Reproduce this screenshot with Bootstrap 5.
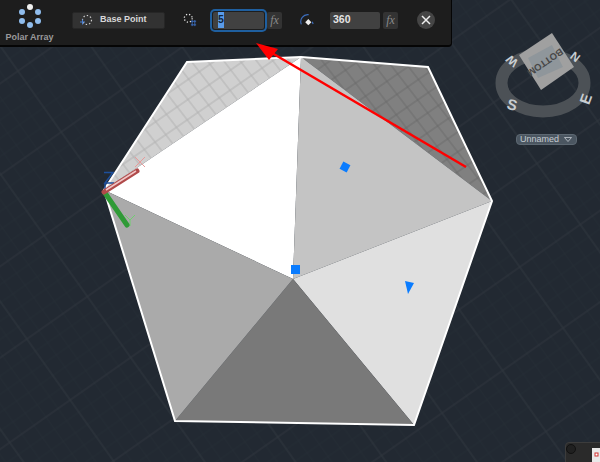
<!DOCTYPE html>
<html lang="en">
<head>
    <meta charset="UTF-8">
    <meta name="viewport" content="width=device-width, initial-scale=1.0">
    <title>Polar Array</title>
    <link href="https://cdn.jsdelivr.net/npm/bootstrap@5.3.0/dist/css/bootstrap.min.css" rel="stylesheet">
    <style>
        body {
            background: #222932;
            font-family: "Liberation Sans", Arial, sans-serif;
            overflow: hidden;
        }
        .stage {
            width: 600px;
            height: 462px;
            overflow: hidden;
        }
        .scene {
            position: absolute;
            left: 0;
            top: 0;
        }
        .ribbon {
            position: relative;
            width: 452px;
            height: 47px;
            background: #1d1d1d;
            border-right: 1px solid #050505;
            border-bottom: 2px solid #050505;
            border-bottom-right-radius: 4px;
            padding-left: 5px;
            padding-bottom: 5px;
            color: #d6d6d6;
        }
        .ribbon-title {
            width: 49px;
            padding-top: 5px;
            font-size: 9px;
            font-weight: 700;
            color: #9a9a9a;
            line-height: 10px;
        }
        .base-btn {
            width: 93px;
            height: 17px;
            margin-left: 18px;
            padding: 0;
            background: #323232;
            border: 1px solid #262626;
            border-radius: 2px;
            font-size: 9px;
            font-weight: 700;
            color: #d8d8d8;
        }
        .base-btn svg {
            margin-left: 7px;
        }
        .base-btn span {
            margin-left: 6px;
        }
        .count-icon {
            margin-left: 18px;
        }
        .val-box {
            height: 17px;
            background: #414141;
            border-radius: 2px;
            font-size: 10.5px;
            font-weight: 700;
            color: #e4e4e4;
            padding-left: 3px;
        }
        .val-count {
            width: 51px;
            margin-left: 16px;
            padding-left: 5px;
            box-shadow: 0 0 0 1px #1d1d1d, 0 0 0 3px #1f5f9f;
        }
        .val-count span {
            background: #5a9be8;
            color: #12263c;
        }
        .val-angle {
            width: 50px;
            margin-left: 16px;
        }
        .fx-box {
            width: 15px;
            height: 17px;
            margin-left: 3px;
            background: #333;
            border-radius: 2px;
            color: #8a8a8a;
            font-family: "Liberation Serif", serif;
            font-style: italic;
            font-size: 12px;
        }
        .angle-icon {
            margin-left: 18px;
        }
        .close-dot {
            width: 18px;
            height: 18px;
            margin-left: 19px;
            background: #454545;
        }
        .cube-pill {
            position: absolute;
            left: 516px;
            top: 134px;
            width: 61px;
            height: 11px;
            background: #4b5661;
            border: 1px solid #5d6872;
            border-radius: 4px;
            color: #c4cad0;
            font-size: 9px;
            line-height: 9px;
            padding-left: 3px;
        }
        .corner-panel {
            position: absolute;
            left: 565px;
            top: 442px;
            width: 40px;
            height: 25px;
            background: #2a2a2a;
            border: 1px solid #3c3c3c;
            border-radius: 4px;
        }
    </style>
</head>
<body>

<div class="stage position-relative">
    <!-- model space -->
    <svg class="scene" width="600" height="462" viewBox="0 0 600 462">
        <defs>
            <pattern id="floorGrid" patternUnits="userSpaceOnUse" width="10" height="10" patternTransform="matrix(6.05 -4.25 4.33 6.1 18 71)">
                <path d="M2 0V10M4 0V10M6 0V10M8 0V10M0 2H10M0 4H10M0 6H10M0 8H10" fill="none" stroke="#252c35" stroke-width=".1"/>
                <path d="M0 0H10M0 10H10M0 0V10M10 0V10" fill="none" stroke="#2f363e" stroke-width=".14"/>
            </pattern>
            <pattern id="faceGrid" patternUnits="userSpaceOnUse" width="10" height="10" patternTransform="matrix(1.07 -.74 1 1.3 199.300 71.700)">
                <path d="M0 0H10M0 10H10M0 0V10M10 0V10" fill="none" stroke="#b2b2b2" stroke-width=".7"/>
            </pattern>
            <pattern id="faceGridDark" patternUnits="userSpaceOnUse" width="10" height="10" patternTransform="matrix(1.07 -.74 1 1.3 199.300 71.700)">
                <path d="M0 0H10M0 10H10M0 0V10M10 0V10" fill="none" stroke="#6b6b6b" stroke-width=".7"/>
            </pattern>
        </defs>
        <rect width="600" height="462" fill="url(#floorGrid)"/>

        <!-- faces -->
        <polygon points="104,190 187,62 301,57" fill="#d0d0d0"/>
        <polygon points="104,190 187,62 301,57" fill="url(#faceGrid)"/>
        <polygon points="301,57 428,67 492,201" fill="#808080"/>
        <polygon points="301,57 428,67 492,201" fill="url(#faceGridDark)"/>
        <polygon points="104,190 301,57 293,279" fill="#ffffff"/>
        <polygon points="301,57 492,201 293,279" fill="#c4c4c4"/>
        <polygon points="492,201 414,425 293,279" fill="#e0e0e0"/>
        <polygon points="293,279 414,425 175,421" fill="#797979"/>
        <polygon points="104,190 293,279 175,421" fill="#aaaaaa"/>
        <polygon points="104,190 187,62 301,57 428,67 492,201 414,425 175,421" fill="none" stroke="#ffffff" stroke-width="2"/>

        <!-- grips -->
        <rect x="291" y="265" width="9" height="9" fill="#0a7cff"/>
        <rect x="341" y="163" width="8" height="8" fill="#0a7cff" transform="rotate(28 345 167)"/>
        <polygon points="405,281 414,283 408,294" fill="#0a7cff"/>

        <!-- ucs icon -->
        <path d="M104 172.500H113L105 183H114M105 192V183" fill="none" stroke="#1d4f9c" stroke-width="1.500"/>
        <path d="M135 157L145 167M145 157L135 167" fill="none" stroke="#e89a9a" stroke-width="1"/>
        <path d="M125 215L130 220L135 215M130 220V226" fill="none" stroke="#6fcf6f" stroke-width="1"/>
        <line x1="105" y1="193" x2="127" y2="225" stroke="#2f9a36" stroke-width="5" stroke-linecap="round"/>
        <line x1="104" y1="192" x2="137" y2="171" stroke="#b04a4a" stroke-width="5" stroke-linecap="round"/>
        <line x1="106" y1="190" x2="136" y2="171" stroke="#f0c6c6" stroke-width="1.500"/>

        <!-- view cube -->
        <ellipse cx="543" cy="83" rx="41.500" ry="28.500" fill="none" stroke="#4c5156" stroke-width="12"/>
        <polygon points="519,55 552,33 574,67 541,90" fill="#a0a0a0"/>
        <polygon points="528,58 552,45 563,67 538,78" fill="#8f969b"/>
        <text x="0" y="3" text-anchor="middle" font-size="9.500" font-weight="700" fill="#474747" transform="translate(545,62) rotate(145.500)">BOTTOM</text>
        <g font-weight="700" fill="#c8cdd1" text-anchor="middle">
            <text transform="translate(575,57) rotate(38)" y="4" font-size="12">N</text>
            <text transform="translate(586,99) rotate(-70)" y="5" font-size="15">E</text>
            <text transform="translate(512,105) rotate(15)" y="5" font-size="15">S</text>
            <text transform="translate(512,61) rotate(-140)" y="4" font-size="12">W</text>
        </g>
    </svg>

    <!-- polar array contextual ribbon -->
    <div class="ribbon d-flex align-items-center">
        <div class="ribbon-title d-flex flex-column align-items-center gap-1">
            <svg width="26" height="24" viewBox="0 0 26 24">
                <circle cx="13" cy="3" r="3" fill="#f0f0f0"/>
                <circle cx="21" cy="8" r="3" fill="#8fbcec"/>
                <circle cx="21" cy="17" r="3" fill="#8fbcec"/>
                <circle cx="13" cy="21" r="3" fill="#8fbcec"/>
                <circle cx="5" cy="17" r="3" fill="#8fbcec"/>
                <circle cx="5" cy="8" r="3" fill="#8fbcec"/>
            </svg>
            <span class="text-nowrap">Polar Array</span>
        </div>
        <button type="button" class="base-btn btn d-flex align-items-center">
            <svg width="14" height="12" viewBox="0 0 14 12">
                <circle cx="7" cy="6" r="4.500" fill="none" stroke="#cfcfcf" stroke-width="1.200" stroke-dasharray="1.400 2"/>
                <path d="M0 8H5M2.500 5.500V10.500" stroke="#4a7fd0" stroke-width="1"/>
            </svg>
            <span>Base Point</span>
        </button>
        <svg class="count-icon" width="14" height="14" viewBox="0 0 16 16">
            <circle cx="6" cy="6" r="4.500" fill="none" stroke="#e6e6e6" stroke-width="1.500" stroke-dasharray="1.400 2.200"/>
            <path d="M9 9.500H15M9 13.500H15M10.500 8V15M13.500 8V15" stroke="#3d6fc0" stroke-width="1"/>
        </svg>
        <div class="val-box val-count d-flex align-items-center"><span>5</span></div>
        <div class="fx-box d-flex align-items-center justify-content-center">fx</div>
        <svg class="angle-icon" width="14" height="14" viewBox="0 0 16 16">
            <path d="M1.500 13A8 8 0 0 1 10 2" fill="none" stroke="#3d6fc0" stroke-width="1.300"/>
            <path d="M14 10L15 12.500" stroke="#3d6fc0" stroke-width="1.300"/>
            <rect x="7" y="8" width="5" height="5" fill="#ededed" transform="rotate(45 9.500 10.500)"/>
        </svg>
        <div class="val-box val-angle d-flex align-items-center">360</div>
        <div class="fx-box d-flex align-items-center justify-content-center">fx</div>
        <div class="close-dot rounded-circle d-flex align-items-center justify-content-center">
            <svg width="10" height="10" viewBox="0 0 10 10">
                <path d="M1 1L9 9M9 1L1 9" stroke="#efefef" stroke-width="1.500"/>
            </svg>
        </div>
    </div>

    <!-- red markup arrow, drawn over the ribbon -->
    <svg class="scene" width="600" height="462" viewBox="0 0 600 462">
        <line x1="466" y1="167" x2="272" y2="53" stroke="#ff0000" stroke-width="2.500"/>
        <polygon points="256,43 278,49 269,60" fill="#ff0000"/>
    </svg>

    <!-- view cube name -->
    <div class="cube-pill d-flex align-items-center justify-content-between">
        <span>Unnamed</span>
        <svg class="me-1" width="8" height="5" viewBox="0 0 8 5"><path d="M.5 .5H7.500L4 4.500Z" fill="none" stroke="#c4cad0" stroke-width=".8"/></svg>
    </div>

    <!-- bottom corner window -->
    <div class="corner-panel">
        <svg class="d-block" width="38" height="23" viewBox="0 0 38 23">
            <circle cx="5" cy="6" r="4.500" fill="#202020" stroke="#111" stroke-width="1"/>
            <rect x="26" y="5" width="12" height="18" fill="#e8e8e8"/>
            <rect x="29" y="10" width="3" height="3" fill="#fff" stroke="#d03030" stroke-width="1"/>
        </svg>
    </div>
</div>

<script src="https://cdn.jsdelivr.net/npm/bootstrap@5.3.0/dist/js/bootstrap.bundle.min.js"></script>
</body>
</html>
